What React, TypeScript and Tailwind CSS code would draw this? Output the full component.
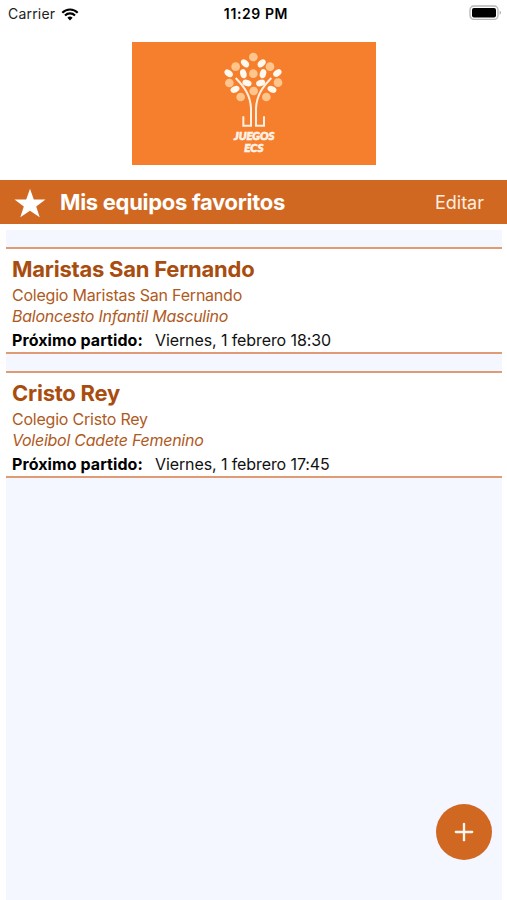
import { Plus } from "lucide-react";

interface Team {
  id: number;
  name: string;
  school: string;
  category: string;
  nextMatch: string;
}

const teams: Team[] = [
  {
    id: 1,
    name: "Maristas San Fernando",
    school: "Colegio Maristas San Fernando",
    category: "Baloncesto Infantil Masculino",
    nextMatch: "Viernes, 1 febrero 18:30",
  },
  {
    id: 2,
    name: "Cristo Rey",
    school: "Colegio Cristo Rey",
    category: "Voleibol Cadete Femenino",
    nextMatch: "Viernes, 1 febrero 17:45",
  },
];

// [x, y] of the round fruits
const fruits = [
  [130, 36],
  [77, 65],
  [180, 65],
  [130, 86],
  [58, 114],
  [204, 113],
  [131, 138],
  [92, 156],
  [169, 156],
];

// [x, y, rotation] of the leaves
const leaves = [
  [105, 55, 45],
  [155, 55, -45],
  [56, 85, 38],
  [202, 84, -38],
  [100, 86, 75],
  [159, 86, -75],
  [111, 114, 15],
  [152, 114, -15],
  [75, 133, -25],
  [186, 133, 25],
];

function WifiIcon() {
  return (
    <svg viewBox="0 0 17 13" className="w-[18px] h-[13px]" fill="none">
      <path d="M.8 4.7a10.9 10.9 0 0 1 15.4 0" stroke="#000" strokeWidth="2.2" />
      <path d="M3.5 7.5a7 7 0 0 1 10 0" stroke="#000" strokeWidth="2.1" />
      <path d="M5.9 9.8a3.8 3.8 0 0 1 5.2 0L8.5 12.5z" fill="#000" />
    </svg>
  );
}

function BatteryIcon() {
  return (
    <svg viewBox="0 0 33 16" className="w-[33px] h-4" fill="none">
      <rect x="1" y="1" width="28" height="13.4" rx="3.8" stroke="#b5b5b5" strokeWidth="1.3" />
      <rect x="3" y="3" width="24" height="9.4" rx="2" fill="#000" />
      <path d="M30.7 5.6c1.5.8 1.5 3.4 0 4.2z" fill="#999" />
    </svg>
  );
}

function Logo() {
  return (
    <svg viewBox="0 0 270 345" className="w-[90px] h-[115px]">
      {fruits.map(([x, y]) => (
        <circle key={`${x}-${y}`} cx={x} cy={y} r="13" fill="#ffc58c" />
      ))}
      {leaves.map(([x, y, angle]) => (
        <ellipse
          key={`${x}-${y}`}
          cx={x}
          cy={y}
          rx="14"
          ry="9.5"
          fill="#fff8ee"
          transform={`rotate(${angle} ${x} ${y})`}
        />
      ))}
      <g fill="none" stroke="#fff0e2" strokeWidth="6">
        <path d="M77 99C104 127 121 150 123 190V242H100V214" />
        <path d="M184 99C157 127 140 150 138 190V242H162V214" />
      </g>
      <g
        fill="#fff3e8"
        stroke="#fff3e8"
        strokeWidth="2"
        fontFamily="Lato, sans-serif"
        fontWeight="900"
        fontStyle="italic"
      >
        <text x="72" y="286" fontSize="33" textLength="121" lengthAdjust="spacingAndGlyphs">
          JUEGOS
        </text>
        <text x="103" y="322" fontSize="33" textLength="57" lengthAdjust="spacingAndGlyphs">
          ECS
        </text>
      </g>
    </svg>
  );
}

function TeamCard({ team }: { team: Team }) {
  return (
    <div className="h-[107px] border-y-2 border-[#df9c74] bg-white pl-1.5 pt-[7px] text-[#af5a1e] whitespace-nowrap">
      <h2 className="text-[22px] leading-[26px] font-bold tracking-[-0.23px] text-[#a84d0f]">
        {team.name}
      </h2>
      <p className="mt-[2px] text-[16px] leading-[22px] tracking-[-0.22px]">{team.school}</p>
      <p className="text-[16px] leading-[21px] italic tracking-[-0.25px]">{team.category}</p>
      <div className="mt-[2px] flex text-[16px] leading-[22px] text-[#111]">
        <span className="w-[143px] font-bold tracking-[0.08px] text-black">
          Próximo partido:
        </span>
        <span className="tracking-[-0.1px]">{team.nextMatch}</span>
      </div>
    </div>
  );
}

export default function App() {
  return (
    <div className="relative flex h-[900px] w-[507px] flex-col overflow-hidden bg-white font-['Inter',sans-serif]">
      {/* Status bar */}
      <div className="grid h-[42px] shrink-0 grid-cols-3 items-start pl-2 pr-[5px] pt-[5px] text-[14px] leading-[18px] text-[#222]">
        <div className="flex items-center gap-[6px]">
          <span className="tracking-[0.2px]">Carrier</span>
          <WifiIcon />
        </div>
        <span className="pl-[2px] text-center font-semibold tracking-[0.6px] text-black">
          11:29 PM
        </span>
        <div className="flex justify-end">
          <BatteryIcon />
        </div>
      </div>

      {/* Logo */}
      <div className="ml-[132px] h-[123px] w-[244px] shrink-0 bg-[#f67f2e] pl-[78px] pt-[3px]">
        <Logo />
      </div>

      {/* Header */}
      <div className="mt-[15px] flex h-11 shrink-0 items-center bg-[#d06822] pl-[14px] pr-[23px] text-white">
        <svg viewBox="0 0 32 30" className="mt-px w-8 h-[30px]" fill="#fff">
          <path d="M16 .8 19.8 11.6H31.5L22.2 18.5 25.7 29.3 16 22.7 6.3 29.3 9.8 18.5.5 11.6H12.2z" />
        </svg>
        <h1 className="ml-[14px] mt-px flex-1 text-[22px] font-bold tracking-[-0.3px]">
          Mis equipos favoritos
        </h1>
        <button className="text-[18px] text-[#ffeee0]">Editar</button>
      </div>

      {/* Teams */}
      <div className="ml-1.5 mr-[5px] mt-1.5 flex flex-1 flex-col gap-[17px] bg-[#f4f7ff] pt-[17px]">
        {teams.map((team) => (
          <TeamCard key={team.id} team={team} />
        ))}
      </div>

      <button className="absolute left-[436px] top-[804px] flex h-14 w-14 items-center justify-center rounded-full bg-[#d06822] text-[#fff5ec]">
        <Plus className="h-7 w-7" strokeWidth={2} />
      </button>
    </div>
  );
}
